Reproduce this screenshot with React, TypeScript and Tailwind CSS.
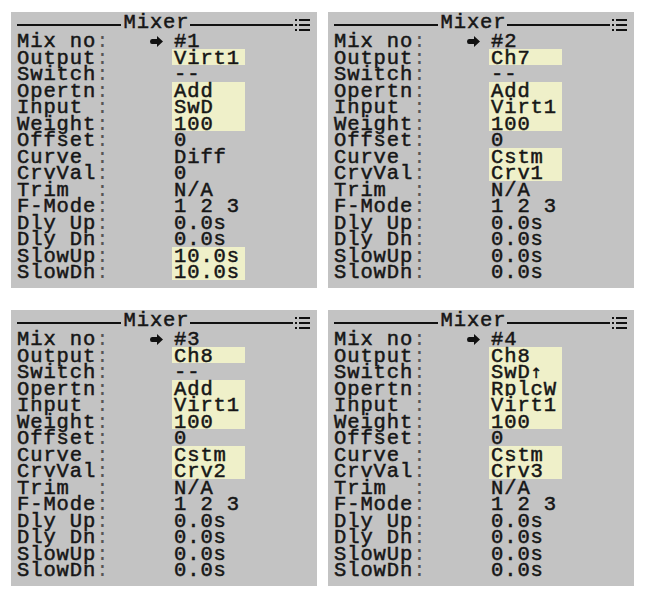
import React from "react";

type Row = { label: string; value: string; hl?: boolean };

const lcdFont = { fontFamily: '"Liberation Mono", "DejaVu Sans Mono", monospace' };

function makeRows(
  no: number,
  values: string[],
  highlighted: number[],
): Row[] {
  const labels = [
    "Output",
    "Switch",
    "Opertn",
    "Input ",
    "Weight",
    "Offset",
    "Curve ",
    "CrvVal",
    "Trim  ",
    "F-Mode",
    "Dly Up",
    "Dly Dn",
    "SlowUp",
    "SlowDn",
  ];
  return [
    { label: "Mix no", value: `#${no}` },
    ...labels.map((label, i) => ({ label, value: values[i], hl: highlighted.includes(i) })),
  ];
}

const mixers: Row[][] = [
  makeRows(
    1,
    ["Virt1", "--", "Add", "SwD", "100", "0", "Diff", "0", "N/A", "1 2 3", "0.0s", "0.0s", "10.0s", "10.0s"],
    [0, 2, 3, 4, 12, 13],
  ),
  makeRows(
    2,
    ["Ch7", "--", "Add", "Virt1", "100", "0", "Cstm", "Crv1", "N/A", "1 2 3", "0.0s", "0.0s", "0.0s", "0.0s"],
    [0, 2, 3, 4, 6, 7],
  ),
  makeRows(
    3,
    ["Ch8", "--", "Add", "Virt1", "100", "0", "Cstm", "Crv2", "N/A", "1 2 3", "0.0s", "0.0s", "0.0s", "0.0s"],
    [0, 2, 3, 4, 6, 7],
  ),
  makeRows(
    4,
    ["Ch8", "SwD↑", "RplcW", "Virt1", "100", "0", "Cstm", "Crv3", "N/A", "1 2 3", "0.0s", "0.0s", "0.0s", "0.0s"],
    [0, 1, 2, 3, 4, 6, 7],
  ),
];

function MenuIcon() {
  return (
    <svg width="15" height="12" viewBox="0 0 15 12" className="ml-[2px] mt-[3px] shrink-0">
      <rect x="0" y="0" width="2" height="2" fill="#111" />
      <rect x="0" y="5" width="2" height="2" fill="#111" />
      <rect x="0" y="10" width="2" height="2" fill="#111" />
      <rect x="4" y="0" width="11" height="2" fill="#111" />
      <rect x="4" y="5" width="11" height="2" fill="#111" />
      <rect x="4" y="10" width="11" height="2" fill="#111" />
    </svg>
  );
}

function Pointer() {
  return (
    <svg width="13" height="11" viewBox="0 0 13 11" className="mt-[4px]">
      <path d="M2 3 H7 V0 L13 5.5 L7 11 V8 H2 Q0 8 0 5.5 Q0 3 2 3 Z" fill="#111" />
    </svg>
  );
}

// the up-arrow in "SwD↑" is a small glyph on the LCD
function Value({ text }: { text: string }) {
  if (text.endsWith("↑")) {
    return (
      <>
        {text.slice(0, -1)}
        <span className="text-[14px] text-[#111]" style={{ fontFamily: '"DejaVu Sans", sans-serif' }}>
          ↑
        </span>
      </>
    );
  }
  return <>{text}</>;
}

function Panel({ rows }: { rows: Row[] }) {
  return (
    <div
      className="h-[276px] bg-[#c3c3c3] pt-[4px] pl-[6px] pr-[7px] text-[20.5px] tracking-[0.9px] text-[#161616] [-webkit-text-stroke:0.5px_#161616]"
      style={lcdFont}
    >
      {/* title bar */}
      <div className="flex h-[16px] items-start leading-[14px]">
        <div className="mt-[8px] h-[2px] flex-1 bg-[#111]" />
        <span className="ml-[3px]">Mixer</span>
        <div className="mt-[8px] h-[2px] flex-1 bg-[#111]" />
        <MenuIcon />
      </div>

      {rows.map((row) => (
        <div key={row.label} className="flex h-[16.5px] leading-[16.5px]">
          <div className="w-[133px] shrink-0 whitespace-pre pt-[2px]">
            {row.label}
            <span className="text-[#555] [-webkit-text-stroke:0px]">:</span>
          </div>
          <div className="w-[22px] shrink-0">{row.label === "Mix no" && <Pointer />}</div>
          <div
            className={`w-[73px] whitespace-pre pl-[2px] pt-[2px] ${row.hl ? "bg-[#eff0c9]" : ""}`}
          >
            <Value text={row.value} />
          </div>
        </div>
      ))}
    </div>
  );
}

export default function App() {
  return (
    <div className="h-[599px] w-[646px] bg-white pl-[11px] pt-[12px]">
      <div className="grid grid-cols-[306px_306px] gap-x-[11px] gap-y-[22px]">
        {mixers.map((rows, i) => (
          <Panel key={i} rows={rows} />
        ))}
      </div>
    </div>
  );
}
